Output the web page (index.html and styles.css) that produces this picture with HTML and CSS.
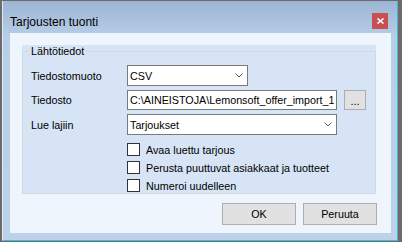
FILE: index.html
```html
<!DOCTYPE html>
<html lang="fi">
<head>
  <meta charset="UTF-8" />
  <title>Tarjousten tuonti</title>
  <link rel="stylesheet" href="styles.css">
</head>
<body>
  <div class="window">
    <div class="titlebar">
      <span class="title">Tarjousten tuonti</span>
      <button class="close" aria-label="Sulje">
        <svg width="7" height="6" viewBox="0 0 7 6">
          <path d="M0.5 0.5 L6.5 5.5 M6.5 0.5 L0.5 5.5" stroke="#fff" stroke-width="1.6" fill="none"/>
        </svg>
      </button>
    </div>

    <div class="client">
      <div class="group">
        <fieldset class="frame">
          <legend>Lähtötiedot</legend>

          <div class="form">
            <label>Tiedostomuoto</label>
            <div class="combo short">
              <span>CSV</span>
              <svg width="8" height="5" viewBox="0 0 8 5"><path d="M0.5 0.5 L4 4 L7.5 0.5" stroke="#5a5a5a" fill="none"/></svg>
            </div>

            <label>Tiedosto</label>
            <div class="file-row">
              <div class="textbox">C:\AINEISTOJA\Lemonsoft_offer_import_1</div>
              <button class="browse">...</button>
            </div>

            <label>Lue lajiin</label>
            <div class="combo wide">
              <span>Tarjoukset</span>
              <svg width="8" height="5" viewBox="0 0 8 5"><path d="M0.5 0.5 L4 4 L7.5 0.5" stroke="#5a5a5a" fill="none"/></svg>
            </div>
          </div>

          <div class="checks">
            <div class="check"><span class="box"></span>Avaa luettu tarjous</div>
            <div class="check"><span class="box"></span>Perusta puuttuvat asiakkaat ja tuotteet</div>
            <div class="check"><span class="box"></span>Numeroi uudelleen</div>
          </div>
        </fieldset>
      </div>

      <div class="actions">
        <button class="btn">OK</button>
        <button class="btn">Peruuta</button>
      </div>
    </div>
  </div>
</body>
</html>
```

FILE: styles.css
```css
* {
  box-sizing: border-box;
  margin: 0;
  padding: 0;
}

body {
  width: 402px;
  height: 242px;
  padding: 1px 4px 1px 2px;
  background-color: #6b6b6b;
  font-family: "Liberation Sans", Arial, sans-serif;
  font-size: 10.75px;
  color: #000;
  overflow: hidden;
}

.window {
  width: 396px;
  height: 240px;
  padding: 0 6px 7px 7px;
  border-left: 1px solid #e4eaf1;
  border-right: 1px solid #3cbcd8;
  border-bottom: 1px solid #3cbcd8;
  background: linear-gradient(#9cb5d3, #b7cee8 36px, #bbd2ea);
}

.titlebar {
  height: 32px;
  display: flex;
  justify-content: space-between;
  align-items: flex-start;
}

.title {
  margin-top: 14px;
  font-size: 12px;
  line-height: 14px;
}

.close {
  width: 16px;
  height: 16px;
  margin-top: 12px;
  margin-right: 3px;
  border: none;
  background-color: #c75050;
  display: flex;
  justify-content: center;
  align-items: center;
}

.client {
  height: 200px;
  padding: 12px 15px 0 12px;
  background-color: #eef5fd;
}

.group {
  height: 149px;
  background-color: #d6e4f5;
}

.frame {
  height: 149px;
  min-width: 0;
  padding: 0 6px;
  border: 1px solid #d3d9e0;
}

legend {
  padding: 1px 2px 0;
  line-height: 11px;
}

.form {
  margin-top: 8px;
  display: grid;
  grid-template-columns: 98px auto;
  row-gap: 4px;
  align-items: center;
}

.form label {
  padding-left: 2px;
}

.combo,
.textbox {
  display: flex;
  align-items: center;
  justify-content: space-between;
  height: 21px;
  padding: 0 4px 0 2px;
  background-color: #fff;
  border: 1px solid #7a7a7a;
  white-space: nowrap;
  overflow: hidden;
}

.combo.short {
  width: 121px;
}

.combo.wide {
  width: 210px;
}

.file-row {
  display: flex;
  gap: 7px;
}

.textbox {
  width: 210px;
  height: 20px;
  justify-content: flex-start;
}

.browse {
  width: 22px;
  height: 20px;
  background-color: #e1e1e1;
  border: 1px solid #adadad;
  font: inherit;
  line-height: 14px;
  padding-top: 2px;
}

.checks {
  margin-top: 8px;
  padding-left: 98px;
  display: flex;
  flex-direction: column;
  gap: 5px;
}

.check {
  display: flex;
  align-items: center;
  gap: 6px;
  height: 13px;
}

.box {
  width: 13px;
  height: 13px;
  background-color: #fff;
  border: 1px solid #333;
}

.actions {
  margin-top: 9px;
  margin-right: -1px;
  display: flex;
  justify-content: flex-end;
  gap: 7px;
}

.btn {
  width: 74px;
  height: 22px;
  background-color: #e1e1e1;
  border: 1px solid #adadad;
  font: inherit;
  color: #000;
}
```
